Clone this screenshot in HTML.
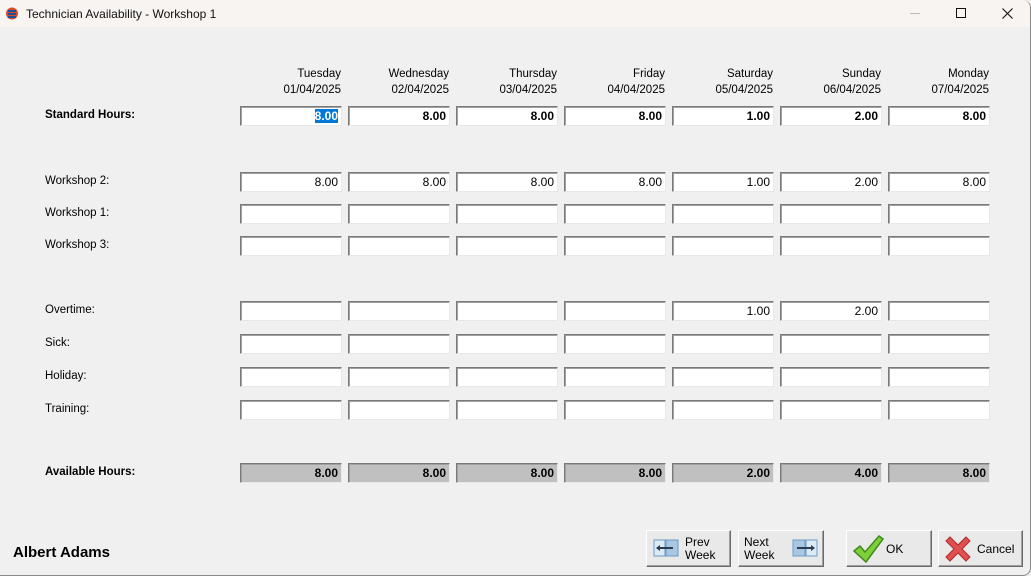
<!DOCTYPE html>
<html><head><meta charset="utf-8">
<style>
*{box-sizing:border-box;margin:0;padding:0}
body{width:1031px;height:576px;overflow:hidden;background:#f0f0f0;font-family:"Liberation Sans",Arial,sans-serif;font-size:12px;color:#000;position:relative}
#win{position:absolute;left:0;top:0;width:1031px;height:576px;border-right:1px solid #888;border-bottom:1px solid #888;border-radius:0 8px 8px 0;background:#f0f0f0;overflow:hidden}
#tb{position:absolute;left:0;top:0;width:1031px;height:27px;background:#f7f4f2}
#tb .t{position:absolute;left:26px;top:7px;font-size:12px;color:#111}
.a{position:absolute}
.lbl{position:absolute;left:45px;font-size:11.5px}
.b{font-weight:bold}
.hd{position:absolute;width:102px;text-align:right;font-size:11.5px;line-height:16px}
.bx{position:absolute;width:102px;height:20px;background:#fff;border:1px solid;border-color:#7a7a7a #e8e8e8 #e8e8e8 #7a7a7a;box-shadow:inset 1px 1px 0 #a0a0a0;text-align:right;padding-right:3px;line-height:19px;font-size:12px}
.gr{background:#c0c0c0}
.btn{position:absolute;top:530px;height:37px;background:#e9e9e9;border:1px solid;border-color:#fff #6a6a6a #6a6a6a #fff;box-shadow:inset -1px -1px 0 #a0a0a0;font-size:12px}
</style></head><body>
<div id="win">
<div id="tb">
<svg class="a" style="left:6px;top:7px" width="12" height="13" viewBox="0 0 12 13"><circle cx="6" cy="6.5" r="6" fill="#d94a2b"/><path d="M2 4h8M2 7h8M2 10h8" stroke="#1d4e9a" stroke-width="2"/></svg>
<span class="t">Technician Availability - Workshop 1</span>
<div class="a" style="left:910px;top:13px;width:10px;height:1px;background:#bbb"></div>
<div class="a" style="left:956px;top:8px;width:10px;height:10px;border:1px solid #111"></div>
<svg class="a" style="left:1002px;top:8px" width="11" height="11"><path d="M0.5 0.5L10.5 10.5M10.5 0.5L0.5 10.5" stroke="#111" stroke-width="1.1"/></svg>
</div>
<div id="c"></div>
<div class="a b" style="left:13px;top:544px;font-size:15px">Albert Adams</div>

<div class="btn" style="left:646px;width:85px">
 <svg class="a" style="left:6px;top:8px" width="26" height="18"><rect x="1" y="1" width="11" height="16" fill="#dbeaf7" stroke="#6b9cc8"/><rect x="13" y="1" width="12" height="16" fill="#a9c7e0" stroke="#6b9cc8"/><path d="M4 9h16" stroke="#2a3b52" stroke-width="2"/><path d="M3 9l4-3v6z" fill="#2a3b52"/></svg>
 <div class="a" style="left:38px;top:5px;line-height:13px">Prev<br>Week</div></div>
<div class="btn" style="left:738px;width:86px">
 <div class="a" style="left:5px;top:5px;line-height:13px">Next<br>Week</div>
 <svg class="a" style="left:53px;top:8px" width="26" height="18"><rect x="1" y="1" width="12" height="16" fill="#a9c7e0" stroke="#6b9cc8"/><rect x="14" y="1" width="11" height="16" fill="#dbeaf7" stroke="#6b9cc8"/><path d="M5 9h16" stroke="#2a3b52" stroke-width="2"/><path d="M23 9l-4-3v6z" fill="#2a3b52"/></svg></div>
<div class="btn" style="left:846px;width:86px">
 <svg class="a" style="left:5px;top:3px" width="32" height="30"><path d="M2 17l6-5 5 6L27 2l4 3-17 23z" fill="#7fcf3a" stroke="#3f8a1c" stroke-width="1.5"/></svg>
 <div class="a" style="left:39px;top:11px">OK</div></div>
<div class="btn" style="left:938px;width:85px">
 <svg class="a" style="left:5px;top:4px" width="28" height="28"><path d="M2 6l4-4 8 8 8-8 4 4-8 8 8 8-4 4-8-8-8 8-4-4 8-8z" fill="#e05050" stroke="#b02a2a"/></svg>
 <div class="a" style="left:38px;top:11px">Cancel</div></div>
</div>
<script>
var c=document.getElementById('c'),h='';
var days=['Tuesday','Wednesday','Thursday','Friday','Saturday','Sunday','Monday'];
var dates=['01/04/2025','02/04/2025','03/04/2025','04/04/2025','05/04/2025','06/04/2025','07/04/2025'];
function X(i){return 240+i*108}
for(var i=0;i<7;i++)h+='<div class="hd" style="left:'+(X(i)-1)+'px;top:66px">'+days[i]+'<br>'+dates[i]+'</div>';
var rows=[
['Standard Hours:',106,['8.00','8.00','8.00','8.00','1.00','2.00','8.00'],'b'],
['Workshop 2:',172,['8.00','8.00','8.00','8.00','1.00','2.00','8.00'],''],
['Workshop 1:',204,[],''],['Workshop 3:',236,[],''],
['Overtime:',301,['','','','','1.00','2.00',''],''],
['Sick:',334,[],''],['Holiday:',367,[],''],['Training:',400,[],''],
['Available Hours:',463,['8.00','8.00','8.00','8.00','2.00','4.00','8.00'],'bg']];
rows.forEach(function(r){
 var bold=r[3].indexOf('b')>=0,gr=r[3]=='bg';
 h+='<div class="lbl'+(bold?' b':'')+'" style="top:'+(r[1]+3)+'px">'+r[0]+'</div>';
 for(var i=0;i<7;i++){var v=r[2][i]||'';
  if(r[1]==106&&i==0)v='<span style="background:#0078d7;color:#fff">8.00</span>';
  h+='<div class="bx'+(gr?' gr':'')+(bold?' b':'')+'" style="left:'+X(i)+'px;top:'+r[1]+'px">'+v+'</div>';}
});
c.innerHTML=h;
</script>
</body></html>
